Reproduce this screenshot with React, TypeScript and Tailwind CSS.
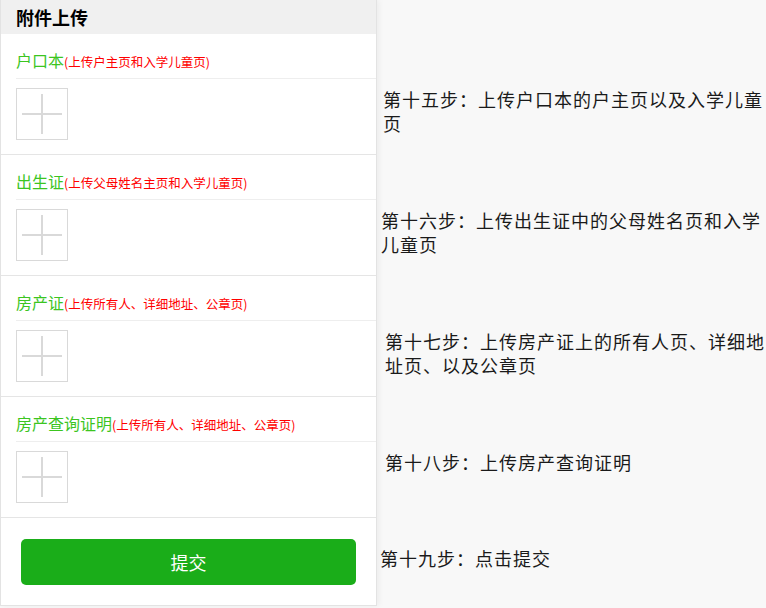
import React from 'react';

const FONT = { fontFamily: '"Noto Sans CJK SC", "Noto Sans", sans-serif' };

interface Section {
  title: string;
  hint: string;
}

const sections: Section[] = [
  { title: '户口本', hint: '(上传户主页和入学儿童页)' },
  { title: '出生证', hint: '(上传父母姓名主页和入学儿童页)' },
  { title: '房产证', hint: '(上传所有人、详细地址、公章页)' },
  { title: '房产查询证明', hint: '(上传所有人、详细地址、公章页)' },
];

const steps = [
  { text: '第十五步：上传户口本的户主页以及入学儿童页', cls: 'pl-[6px]' },
  { text: '第十六步：上传出生证中的父母姓名页和入学儿童页', cls: 'pl-[4px]' },
  { text: '第十七步：上传房产证上的所有人页、详细地址页、以及公章页', cls: 'pl-[8px]' },
  { text: '第十八步：上传房产查询证明', cls: 'pl-[8px]' },
];

const UploadBox: React.FC = () => (
  <div className="relative w-[52px] h-[52px] border border-[#d9d9d9] bg-white">
    <div className="absolute left-[5px] right-[5px] top-1/2 -translate-y-1/2 h-[2px] bg-[#d9d9d9]" />
    <div className="absolute top-[5px] bottom-[5px] left-1/2 -translate-x-1/2 w-[2px] bg-[#d9d9d9]" />
  </div>
);

export default function App() {
  return (
    <div className="flex w-[766px] h-[608px] overflow-hidden bg-[#f8f8f8]" style={FONT}>
      <div className="w-[377px] shrink-0 h-[606px] bg-white border-x border-b border-[#e3e3e3] shadow-[2px_0_6px_rgba(0,0,0,0.05)] flex flex-col">
        <div className="h-[34px] bg-[#f0f0f0] flex items-center pl-[15px]">
          <h1 className="text-[18px] font-bold text-black leading-none">附件上传</h1>
        </div>
        {sections.map((s) => (
          <div key={s.title} className="h-[121px] border-b border-[#e5e5e5] flex flex-col">
            <div className="ml-[15px] h-[45px] pt-[16px] border-b border-[#eeeeee] flex items-baseline">
              <span className="text-[16px] leading-[20px] text-[#3cc51f]">{s.title}</span>
              <span className="text-[12.5px] leading-[20px] text-[#ff0000]">{s.hint}</span>
            </div>
            <div className="pl-[15px] pt-[9px]">
              <UploadBox />
            </div>
          </div>
        ))}
        <div className="pt-[21px] pl-[20px] pr-[20px]">
          <button className="w-full h-[46px] rounded-[5px] bg-[#1aad19] text-white text-[18px]">提交</button>
        </div>
      </div>

      <div className="flex flex-col flex-1 text-[18px] leading-[24px] tracking-[1px] text-[#1a1a1a]">
        <div className="h-[34px]" />
        {steps.map((st) => (
          <div key={st.text} className={`h-[121px] pt-[53px] ${st.cls}`}>
            <p className="w-[382px]">{st.text}</p>
          </div>
        ))}
        <div className="pt-[28px] pl-[3px]">
          <p>第十九步：点击提交</p>
        </div>
      </div>
    </div>
  );
}
